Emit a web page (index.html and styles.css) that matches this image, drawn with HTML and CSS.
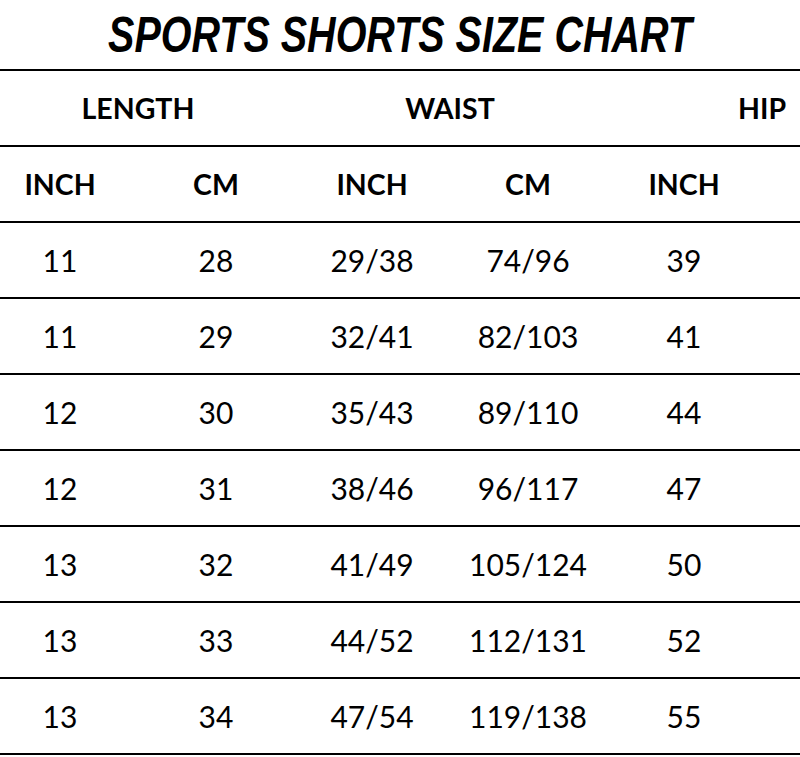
FILE: index.html
```html
<!DOCTYPE html>
<html lang="en">
<head>
<meta charset="utf-8">
<title>Sports Shorts Size Chart</title>
<link rel="stylesheet" href="styles.css">
</head>
<body>
<h1 class="title">SPORTS SHORTS SIZE CHART</h1>
<div class="chart">
  <div class="row group-row">
    <div class="cell span2 first">LENGTH</div>
    <div class="cell span2">WAIST</div>
    <div class="cell span2 hip">HIP</div>
  </div>
  <div class="row unit-row">
    <div class="cell first">INCH</div>
    <div class="cell">CM</div>
    <div class="cell">INCH</div>
    <div class="cell">CM</div>
    <div class="cell">INCH</div>
    <div class="cell"></div>
  </div>
  <div class="row data-row">
    <div class="cell first">11</div><div class="cell">28</div><div class="cell">29/38</div><div class="cell">74/96</div><div class="cell">39</div><div class="cell"></div>
  </div>
  <div class="row data-row">
    <div class="cell first">11</div><div class="cell">29</div><div class="cell">32/41</div><div class="cell">82/103</div><div class="cell">41</div><div class="cell"></div>
  </div>
  <div class="row data-row">
    <div class="cell first">12</div><div class="cell">30</div><div class="cell">35/43</div><div class="cell">89/110</div><div class="cell">44</div><div class="cell"></div>
  </div>
  <div class="row data-row">
    <div class="cell first">12</div><div class="cell">31</div><div class="cell">38/46</div><div class="cell">96/117</div><div class="cell">47</div><div class="cell"></div>
  </div>
  <div class="row data-row">
    <div class="cell first">13</div><div class="cell">32</div><div class="cell">41/49</div><div class="cell">105/124</div><div class="cell">50</div><div class="cell"></div>
  </div>
  <div class="row data-row">
    <div class="cell first">13</div><div class="cell">33</div><div class="cell">44/52</div><div class="cell">112/131</div><div class="cell">52</div><div class="cell"></div>
  </div>
  <div class="row data-row">
    <div class="cell first">13</div><div class="cell">34</div><div class="cell">47/54</div><div class="cell">119/138</div><div class="cell">55</div><div class="cell"></div>
  </div>
</div>
</body>
</html>
```
FILE: styles.css
```css
html, body {
  margin: 0;
  padding: 0;
  background: #fff;
  overflow: hidden;
}

body {
  width: 800px;
  color: #000;
  font-family: Lato, "Open Sans", sans-serif;
}

.title {
  margin: 0;
  height: 69px;
  padding-top: 11px;
  box-sizing: border-box;
  text-align: center;
  font-family: "Liberation Sans", Arial, sans-serif;
  font-weight: 700;
  font-style: italic;
  font-size: 50px;
  line-height: 48px;
  white-space: nowrap;
  transform: scaleX(0.79);
}

.chart {
  width: 800px;
  border-top: 2px solid #000;
}

.row {
  display: grid;
  grid-template-columns: 138px repeat(4, 156px) 1fr;
  height: 76px;
  box-sizing: border-box;
  border-bottom: 2px solid #000;
}

.cell {
  display: flex;
  align-items: center;
  justify-content: center;
  font-size: 30px;
  white-space: nowrap;
}

.cell.first {
  padding-right: 18px;
}

.span2 {
  grid-column: span 2;
}

.cell.hip {
  padding-left: 118px;
}

.group-row .cell,
.unit-row .cell {
  font-weight: 700;
  font-size: 28.5px;
}

.data-row .cell {
  font-weight: 400;
}
```
